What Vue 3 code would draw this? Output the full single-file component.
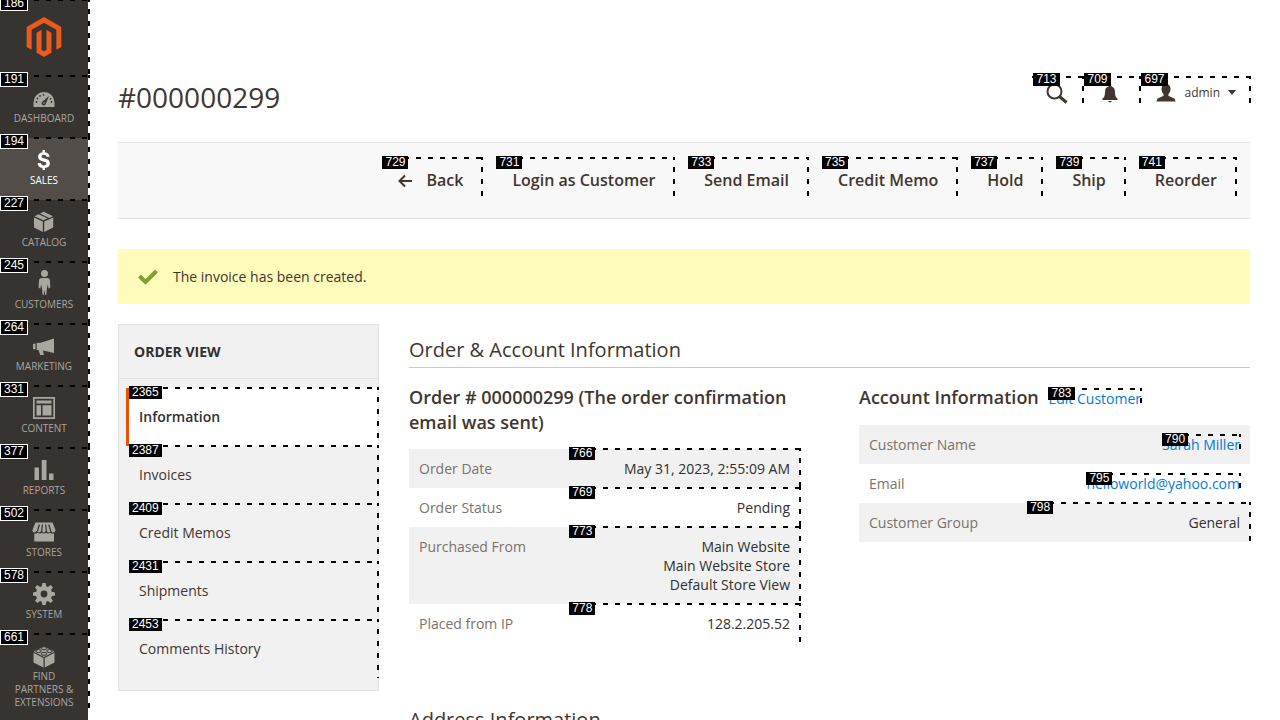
<script setup>
const menu = [
  { id: 191, label: 'Dashboard', icon: 'dashboard' },
  { id: 194, label: 'Sales', icon: 'sales', active: true },
  { id: 227, label: 'Catalog', icon: 'catalog' },
  { id: 245, label: 'Customers', icon: 'customers' },
  { id: 264, label: 'Marketing', icon: 'marketing' },
  { id: 331, label: 'Content', icon: 'content' },
  { id: 377, label: 'Reports', icon: 'reports' },
  { id: 502, label: 'Stores', icon: 'stores' },
  { id: 578, label: 'System', icon: 'system' },
  { id: 661, label: 'Find Partners & Extensions', icon: 'partners' },
]
const actions = [
  { id: 729, label: 'Back', back: true },
  { id: 731, label: 'Login as Customer' },
  { id: 733, label: 'Send Email' },
  { id: 735, label: 'Credit Memo' },
  { id: 737, label: 'Hold' },
  { id: 739, label: 'Ship' },
  { id: 741, label: 'Reorder' },
]
const tabs = [
  { id: 2365, label: 'Information', active: true },
  { id: 2387, label: 'Invoices' },
  { id: 2409, label: 'Credit Memos' },
  { id: 2431, label: 'Shipments' },
  { id: 2453, label: 'Comments History' },
]
const orderRows = [
  { id: 766, label: 'Order Date', lines: ['May 31, 2023, 2:55:09 AM'] },
  { id: 769, label: 'Order Status', lines: ['Pending'] },
  { id: 773, label: 'Purchased From', lines: ['Main Website', 'Main Website Store', 'Default Store View'] },
  { id: 778, label: 'Placed from IP', lines: ['128.2.205.52'] },
]
</script>

<template>
  <div class="shell">
    <nav class="sidebar" aria-label="Main menu">
      <a href="#" class="logo" aria-label="Magento">
        <svg width="40" height="40" viewBox="0 0 24 24" fill="#eb5b20"><path d="M12 24l-4.455-2.572v-12l2.97-1.715v12.001l1.485.902 1.485-.902V7.713l2.971 1.715v12L12 24zM22.391 6v12l-2.969 1.714V7.713L12 3.43 4.574 7.713v12.001L1.609 18V6L12 0l10.391 6z" /></svg>
        <span class="mark"><span class="tag">186</span></span>
      </a>
      <a v-for="m in menu" :key="m.id" href="#" class="item" :class="{ active: m.active }">
        <svg class="icon" width="24" height="24" viewBox="0 0 24 24" aria-hidden="true">
          <g v-if="m.icon === 'dashboard'">
            <path d="M1.500 21v-4.500a10.500 10.500 0 0 1 21 0V21z" />
            <g class="cut"><circle cx="4.500" cy="16" r=".9" /><circle cx="5.500" cy="12.500" r=".9" /><circle cx="8" cy="10" r=".9" /><circle cx="11.500" cy="8.800" r=".9" /><circle cx="19.500" cy="16" r=".9" /><circle cx="18.500" cy="12.800" r=".9" /><path d="M17 10l-3.200 7.800a2.100 2.100 0 1 1-3.200-2.200z" /></g>
            <circle cx="12" cy="17" r=".8" />
          </g>
          <path v-else-if="m.icon === 'sales'" d="M10.500 2h2.400v2.200c2.900.4 4.400 2 4.600 4.600h-3.200c-.2-1.400-.9-2.100-2.400-2.100-1.600 0-2.400.7-2.400 1.700 0 1.200.9 1.600 3.200 2.100 3.300.8 5.200 1.900 5.200 4.900 0 2.600-1.900 4.200-5 4.600V22h-2.400v-2C7.300 19.600 5.700 17.900 5.600 15h3.300c.2 1.600 1.100 2.400 2.900 2.400 1.600 0 2.600-.6 2.600-1.800s-.9-1.700-3.200-2.200C7.900 12.600 6.100 11.500 6.100 8.700c0-2.400 1.600-4.100 4.400-4.500z" />
          <path v-else-if="m.icon === 'catalog'" d="M2 7.500l8.800 4V22L2 17.500zM12.200 11.500l9-4v10L12.200 22zM2.500 6.200l4-2 9 4-4 2zM8 3.500L11.700 1.800l9.300 4.400-3.800 1.700z" />
          <path v-else-if="m.icon === 'customers'" d="M12.500-2a3.500 3.500 0 1 1 0 7 3.500 3.500 0 0 1 0-7zM9.500 6h6c1.600 0 2.300 1 2.400 2.500l.4 7-1.800 1.300-.6-4.500-1 4-.6 6.700H13.300l-.8-5-.8 5h-1l-.7-6.700-1-4-.6 4.500-1.800-1.300.4-7C7.100 7 7.900 6 9.500 6z" />
          <path v-else-if="m.icon === 'marketing'" d="M1 10l2.500-.5v6L1 15zM4.700 9l4-.2L22 4.500V19l-11-2.500.8 4.500H8.200L6.500 16H4.700z" />
          <g v-else-if="m.icon === 'content'"><path d="M1 1h22v22H1zM2.700 2.700v18.600h18.600V2.700z" fill-rule="evenodd" /><path d="M4.500 4.500h15v3h-15zM4.500 9.200H9v10.300H4.500zM10.500 9.200h9v10.300h-9z" /></g>
          <path v-else-if="m.icon === 'reports'" d="M2.500 9.500H7V22H2.500zM9.700 2h4.800v20H9.700zM17 15.500h4.500V22H17z" />
          <g v-else-if="m.icon === 'stores'"><path d="M3.500 2.500h17l3 7.500c0 3-3.500 3.200-4 1h-.8c-.6 1.900-3.300 1.900-4 0h-1c-.6 1.900-3.200 1.900-3.800 0H9c-.6 1.900-3.300 1.900-3.900 0h-.7C3.600 13.200.2 12.700.4 10z" /><path d="M2.300 13.500c1.500.2 2.700-.1 3.400-.8 1.200 1 3.100 1 4.200 0 1.200 1 3 1 4.200 0 1.200 1 3 1 4.200 0 .9.700 2 1 3.700.8v8H2.300z" /><path class="line" d="M7.400 4.500L5.500 11M10.500 4.500l-.8 6.500M13.600 4.500l.8 6.500M16.800 4.500L18.700 11" /></g>
          <path v-else-if="m.icon === 'system'" fill-rule="evenodd" d="M10.400 1h3.200l.7 3.200 1.600.7 2.800-1.800 2.200 2.200-1.800 2.800.7 1.600 3.200.7v3.200l-3.200.7-.7 1.600 1.800 2.800-2.200 2.200-2.800-1.800-1.600.7-.7 3.200h-3.200l-.7-3.200-1.600-.7-2.800 1.800-2.200-2.200 1.800-2.800-.7-1.600-3.200-.7v-3.200l3.200-.7.7-1.600-1.800-2.800 2.200-2.200 2.800 1.800 1.600-.7zM12 8.600a3.400 3.400 0 1 0 0 6.800 3.400 3.400 0 0 0 0-6.800z" />
          <g v-else><path d="M1.500 7.500l10.500-5 10.500 5L12 13zM1.500 8.800L11.500 14v9.500l-10-5zM12.700 14l9.800-5.200v9.700l-9.800 5z" /><g class="stud"><ellipse cx="12" cy="4.200" rx="2.800" ry="1.500" /><ellipse cx="6.500" cy="7" rx="2.800" ry="1.500" /><ellipse cx="17.500" cy="7" rx="2.800" ry="1.500" /><ellipse cx="12" cy="9.800" rx="2.800" ry="1.500" /></g></g>
        </svg>
        <span class="label">{{ m.label }}</span>
        <span class="mark"><span class="tag">{{ m.id }}</span></span>
      </a>
    </nav>

    <main class="page">
      <header class="top">
        <h1>#000000299</h1>
        <div class="tools">
          <button class="tool search" aria-label="Search">
            <svg width="22" height="22" viewBox="0 0 22 22" fill="none" stroke="#41362f"><circle cx="8.500" cy="9.500" r="7" stroke-width="2" /><path d="M13.500 14.500l7 6" stroke-width="3" /></svg>
            <span class="mark"><span class="tag">713</span></span>
          </button>
          <button class="tool bell" aria-label="Notifications">
            <svg width="16" height="18" viewBox="0 0 16 18" fill="#41362f"><path d="M8 0c1 0 1.500.7 1.500 1.500C12 2.300 13 4.300 13 7c0 4 1 5.500 2.500 6.500V15H.5v-1.500C2 12.500 3 11 3 7c0-2.700 1-4.700 3.500-5.500C6.500.7 7 0 8 0zM6.200 16h3.600c-.3 1-.9 1.400-1.800 1.400S6.500 17 6.200 16z" /></svg>
            <span class="mark"><span class="tag">709</span></span>
          </button>
          <button class="tool user">
            <svg width="20" height="18" viewBox="0 0 20 18" fill="#41362f"><path d="M10 0c3 0 4.500 2 4.500 5 0 2-.8 4-2 5v2c2 1 7 1.500 7 5.500H.5c0-4 5-4.500 7-5.500v-2c-1.200-1-2-3-2-5C5.500 2 7 0 10 0z" /></svg>
            <span>admin</span>
            <svg width="8" height="5" viewBox="0 0 8 5" fill="#41362f"><path d="M0 0h8L4 5z" /></svg>
            <span class="mark"><span class="tag">697</span></span>
          </button>
        </div>
      </header>

      <div class="toolbar">
        <button v-for="a in actions" :key="a.id" class="action">
          <svg v-if="a.back" width="14" height="14" viewBox="0 0 14 14" fill="none" stroke="#41362f" stroke-width="2"><path d="M14 7H1.500M7 1.500L1.500 7 7 12.500" /></svg>
          {{ a.label }}
          <span class="mark"><span class="tag">{{ a.id }}</span></span>
        </button>
      </div>

      <div class="message" role="status">
        <svg width="20" height="16" viewBox="0 0 20 16" fill="none" stroke="#79a22e" stroke-width="4"><path d="M1.500 7l6 6L18.500 2" /></svg>
        The invoice has been created.
      </div>

      <div class="columns">
        <aside class="panel">
          <h2>Order View</h2>
          <ul>
            <li v-for="t in tabs" :key="t.id">
              <a href="#" :class="{ current: t.active }">{{ t.label }}<span class="mark"><span class="tag">{{ t.id }}</span></span></a>
            </li>
          </ul>
        </aside>

        <div class="content">
          <h2 class="section">Order &amp; Account Information</h2>
          <div class="pair">
            <section>
              <h3>Order # 000000299 (The order confirmation email was sent)</h3>
              <table class="order">
                <tbody>
                  <tr v-for="r in orderRows" :key="r.id">
                    <th scope="row">{{ r.label }}</th>
                    <td>
                      <div v-for="l in r.lines" :key="l">{{ l }}</div>
                      <span class="mark"><span class="tag">{{ r.id }}</span></span>
                    </td>
                  </tr>
                </tbody>
              </table>
            </section>
            <section>
              <h3>Account Information <a href="#" class="link edit">Edit Customer<span class="mark"><span class="tag">783</span></span></a></h3>
              <table class="account">
                <tbody>
                  <tr>
                    <th scope="row">Customer Name</th>
                    <td><a href="#" class="link">Sarah Miller<span class="mark"><span class="tag">790</span></span></a></td>
                  </tr>
                  <tr>
                    <th scope="row">Email</th>
                    <td><a href="#" class="link">helloworld@yahoo.com<span class="mark"><span class="tag">795</span></span></a></td>
                  </tr>
                  <tr>
                    <th scope="row">Customer Group</th>
                    <td>General<span class="mark"><span class="tag">798</span></span></td>
                  </tr>
                </tbody>
              </table>
            </section>
          </div>
          <h2 class="section">Address Information</h2>
        </div>
      </div>
    </main>
  </div>
</template>

<style>
body {
  margin: 0;
  background: #fff;
}
</style>

<style scoped>
.shell {
  display: flex;
  min-height: 100vh;
  font: 14px/19px "Open Sans", sans-serif;
  color: #41362f;
}
.shell *,
.shell {
  box-sizing: border-box;
}
a {
  color: inherit;
  text-decoration: none;
}
button {
  border: 0;
  padding: 0;
  background: none;
  font: inherit;
  color: inherit;
  cursor: pointer;
}
h1,
h2,
h3,
ul {
  margin: 0;
  padding: 0;
  font-weight: 400;
}

/* numbered dashed frames over interactive areas */
.mark {
  position: absolute;
  inset: -1px -1px 0 0;
  pointer-events: none;
  background:
    repeating-linear-gradient(90deg, #000 0 3px, transparent 3px 10px, #000 10px 12px) top / 100% 2px no-repeat,
    repeating-linear-gradient(180deg, #000 0 3px, transparent 3px 10px, #000 10px 12px) right / 2px 100% no-repeat;
}
.tag {
  position: absolute;
  top: -1px;
  left: 0;
  padding: 0 3px;
  background: #000;
  color: #fff;
  font: 400 12px/13px "Liberation Sans", sans-serif;
  text-transform: none;
}

.sidebar {
  flex: none;
  width: 88px;
  background: #373330;
}
.logo,
.item {
  position: relative;
  display: flex;
  flex-direction: column;
  align-items: center;
}
.logo {
  height: 76px;
  padding-top: 17px;
}
.item {
  min-height: 62px;
  padding: 10px 10px 0;
  color: #aaa6a0;
  text-align: center;
}
.item.active {
  background: #524d49;
  color: #fff;
}
.icon {
  fill: currentColor;
  overflow: visible;
}
.cut {
  fill: #373330;
}
.line {
  stroke: #373330;
  stroke-width: 1.2;
}
.stud {
  fill: #aaa6a0;
  stroke: #373330;
  stroke-width: 1;
}
.label {
  margin-top: 2px;
  font-size: 10px;
  line-height: 13px;
  text-transform: uppercase;
}
.sidebar .mark {
  right: -2px;
}
.sidebar .tag {
  top: -3px;
  border: 1px solid #fff;
}

.page {
  flex: 1;
  min-width: 0;
  padding: 76px 30px 0;
}
.top {
  display: flex;
  justify-content: space-between;
  height: 66px;
}
h1 {
  font-size: 28px;
  line-height: 42px;
}
.tools {
  display: flex;
}
.tool {
  position: relative;
  display: flex;
  align-items: center;
  height: 29px;
  padding-top: 4px;
  font-size: 12px;
}
.search {
  width: 51px;
  padding-left: 14px;
}
.bell {
  width: 57px;
  padding: 6px 0 0 19px;
}
.user {
  gap: 8px;
  padding-left: 16px;
  padding-right: 14px;
}
.tool .mark {
  top: 0;
}
.tool .tag {
  top: -3px;
  left: 1px;
}

.toolbar {
  display: flex;
  justify-content: flex-end;
  gap: 14px;
  padding: 15px 14px 19px;
  border: solid #e3e3e3;
  border-width: 1px 0;
  background: #f8f8f8;
}
.action {
  position: relative;
  display: flex;
  align-items: center;
  gap: 14px;
  height: 41px;
  padding: 4px 19px 0 16px;
  font-size: 16px;
  font-weight: 600;
}
.message {
  display: flex;
  align-items: center;
  gap: 15px;
  margin: 30px 0 20px;
  padding: 18px 20px;
  background: #fffbbb;
}
.columns {
  display: grid;
  grid-template-columns: 261px 1fr;
  gap: 30px;
  align-items: start;
}
.panel {
  padding-bottom: 12px;
  border: 1px solid #e3e3e3;
  background: #f1f1f1;
  color: #41362f;
}
.panel h2 {
  margin-bottom: 9px;
  padding: 17px 15px;
  border-bottom: 1px solid #e3e3e3;
  color: #303030;
  font-size: 14px;
  font-weight: 700;
  text-transform: uppercase;
}
.panel ul {
  list-style: none;
}
.panel li {
  padding-left: 7px;
}
.panel li a {
  position: relative;
  display: block;
  height: 58px;
  padding: 19px 10px;
  border-left: 3px solid transparent;
}
.panel li .current {
  border-left-color: #eb5202;
  background: #fff;
  color: #303030;
  font-weight: 600;
}
.section {
  padding: 12px 0 4px;
  border-bottom: 1px solid #cacaca;
  font-size: 20px;
  line-height: 27px;
}
.pair {
  display: grid;
  grid-template-columns: 1fr 1fr;
  gap: 59px;
  padding: 17px 0 51px;
}
h3 {
  margin-bottom: 14px;
  font-size: 18px;
  font-weight: 600;
  line-height: 25px;
}
table {
  width: 100%;
  border-collapse: collapse;
}
tr:nth-child(odd) {
  background: #f1f1f1;
}
th,
td {
  padding: 10px;
  vertical-align: top;
}
th {
  color: #7a726b;
  font-weight: 400;
  text-align: left;
}
.order th {
  width: 41%;
}
.account th {
  width: 43%;
}
td {
  position: relative;
  color: #303030;
  text-align: right;
}
.link {
  position: relative;
  color: #007bdb;
}
.edit {
  margin-left: 5px;
  font-size: 14px;
  font-weight: 400;
}
</style>
